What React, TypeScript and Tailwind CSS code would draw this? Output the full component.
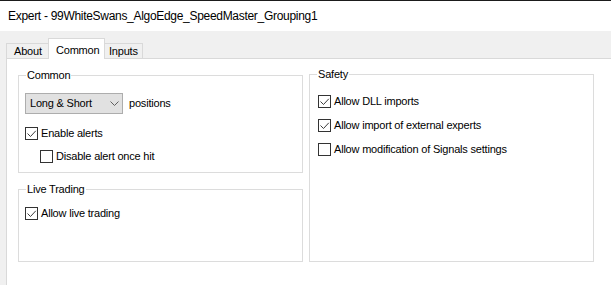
import React, { FC, ReactNode } from "react";

type CheckProps = {
  label: string;
  checked?: boolean;
  className?: string;
};

const CheckRow: FC<CheckProps> = ({ label, checked = false, className = "" }) => {
  return (
    <div className={`flex h-[13px] items-center ${className}`}>
      <div className="relative size-[13px] shrink-0 border border-[#333333] bg-white">
        {checked && (
          <svg
            viewBox="0 0 11 11"
            className="absolute inset-0 size-[11px]"
            fill="none"
            xmlns="http://www.w3.org/2000/svg"
          >
            <path
              d="M1.5 5.5L4.5 8.5L9.8 2.8"
              stroke="#3c3c3c"
              strokeWidth="1"
            />
          </svg>
        )}
      </div>
      <span className="ml-[3px] whitespace-nowrap leading-[13px]">{label}</span>
    </div>
  );
};

type GroupProps = {
  title: string;
  className?: string;
  children?: ReactNode;
};

const GroupBox: FC<GroupProps> = ({ title, className = "", children }) => {
  return (
    <div className={`relative border border-[#dcdcdc] ${className}`}>
      <span className="absolute -top-[8px] left-[7px] bg-white px-[1px] leading-[14px] whitespace-nowrap">
        {title}
      </span>
      {children}
    </div>
  );
};

const App: FC = () => {
  return (
    <div className="h-[285px] w-[611px] overflow-hidden bg-[#f0f0f0] font-['Liberation_Sans',Arial,sans-serif] text-[11px] tracking-[-0.2px] text-black">
      <div className="h-px bg-[#1b1b1b]" />

      <div className="flex h-[30px] items-center bg-white pl-[8px] text-[12px] tracking-[-0.3px]">
        Expert - 99WhiteSwans_AlgoEdge_SpeedMaster_Grouping1
      </div>

      <div className="pl-[6px] pt-[7px]">
        <div className="flex h-[20px] items-end">
          <div className="flex h-[15px] w-[42px] items-center border-l border-t border-[#d9d9d9] pl-[7px] pt-[1px]">
            About
          </div>
          <div className="relative z-10 -mb-px flex h-[21px] w-[57px] items-start border-x border-t border-[#d9d9d9] bg-white pl-[7px] pt-[3px]">
            Common
          </div>
          <div className="flex h-[15px] w-[38px] items-center border-r border-t border-[#d9d9d9] pl-[4px] pt-[1px]">
            Inputs
          </div>
        </div>

        <div className="h-[260px] border-l border-t border-[#d9d9d9] bg-white pl-[11px] pt-[16px]">
          <div className="grid grid-cols-[285px_285px] gap-x-[6px]">
            <div className="flex flex-col gap-[16px]">
              <GroupBox title="Common" className="h-[98px] pl-[6px] pt-[17px]">
                <div className="flex items-center">
                  <div className="flex h-[21px] w-[98px] items-center justify-between border border-[#adadad] bg-[#e1e1e1] pl-[4px] pr-[3px]">
                    <span className="whitespace-nowrap">Long &amp; Short</span>
                    <svg
                      viewBox="0 0 9 5"
                      className="h-[5px] w-[9px]"
                      fill="none"
                      xmlns="http://www.w3.org/2000/svg"
                    >
                      <path d="M0.5 0.5L4.5 4.5L8.5 0.5" stroke="#606060" strokeWidth="1" />
                    </svg>
                  </div>
                  <span className="ml-[6px]">positions</span>
                </div>
                <CheckRow label="Enable alerts" checked className="mt-[13px]" />
                <CheckRow label="Disable alert once hit" className="ml-[15px] mt-[10px]" />
              </GroupBox>

              <GroupBox title="Live Trading" className="h-[73px] pl-[6px] pt-[17px]">
                <CheckRow label="Allow live trading" checked />
              </GroupBox>
            </div>

            <GroupBox title="Safety" className="-mt-px h-[188px] pl-[8px] pt-[20px]">
              <div className="flex flex-col gap-[11px]">
                <CheckRow label="Allow DLL imports" checked />
                <CheckRow label="Allow import of external experts" checked />
                <CheckRow label="Allow modification of Signals settings" />
              </div>
            </GroupBox>
          </div>
        </div>
      </div>
    </div>
  );
};

export default App;
